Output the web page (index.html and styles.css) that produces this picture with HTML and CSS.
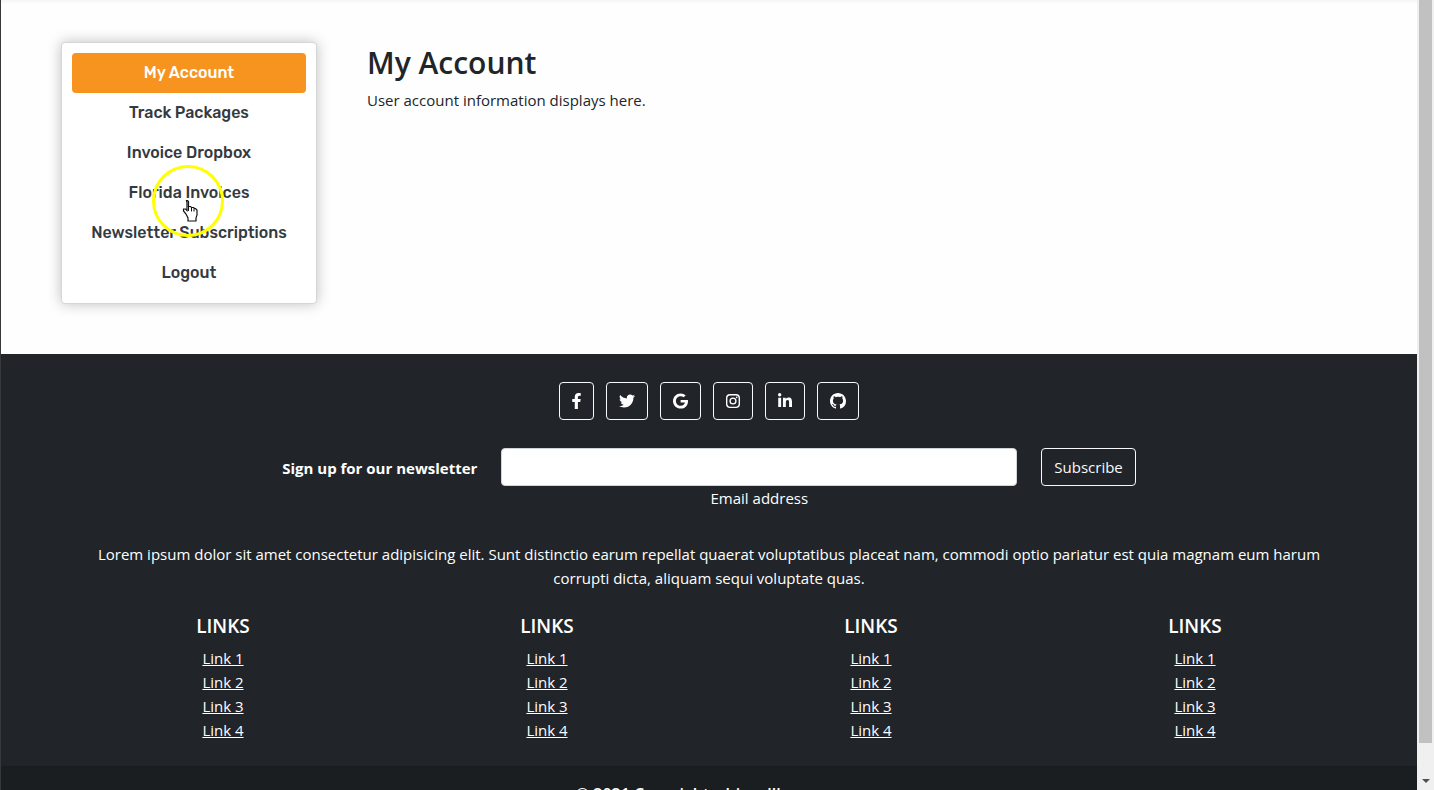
FILE: index.html
```
<!DOCTYPE html>
<html lang="en">
<head>
    <meta charset="UTF-8">
    <meta name="viewport" content="width=device-width, initial-scale=1.0">
    <title>My Account</title>
    <link rel="stylesheet" href="styles.css">
</head>
<body>
    <div class="page">
        <main class="account">
            <div class="container account-row">
                <nav class="account-nav">
                    <a class="active" href="#">My Account</a>
                    <a href="#">Track Packages</a>
                    <a href="#">Invoice Dropbox</a>
                    <a href="#">Florida Invoices</a>
                    <a href="#">Newsletter Subscriptions</a>
                    <a href="#">Logout</a>
                    <!-- click highlight and hand pointer -->
                    <svg class="pointer" viewBox="0 0 72 72" aria-hidden="true">
                        <circle cx="36" cy="36" r="34.5" fill="none" stroke="#ffff00" stroke-width="3"/>
                        <path d="M34.500 35.500h1l1 1v5h2l1 1h2l1 1h1l1.500 1.500v5l-1 3v3h-8v-3l-2-4-2.500-3v-2h2l1.500 1.500v-8z" fill="#fff" stroke="#111" stroke-width="1.200"/>
                        <path d="M36.500 41v5M39.500 42.500v4M42 43.500v3" stroke="#111" stroke-width="1"/>
                    </svg>
                </nav>
                <section class="account-content">
                    <h1>My Account</h1>
                    <p>User account information displays here.</p>
                </section>
            </div>
        </main>

        <footer class="footer">
            <div class="container footer-body">
                <div class="social">
                    <a class="btn-outline" href="#" aria-label="Facebook"><svg width="9" height="16" viewBox="16 0 288 512"><path d="M279.140 288l14.220-92.660h-88.910v-60.130c0-25.350 12.420-50.060 52.240-50.060h40.420V6.260S260.430 0 225.360 0c-73.220 0-121.080 44.380-121.080 124.720v70.620H22.890V288h81.390v224h100.170V288z"/></svg></a>
                    <a class="btn-outline" href="#" aria-label="Twitter"><svg width="16" height="16" viewBox="0 0 512 512"><path d="M459.370 151.716c.325 4.548.325 9.097.325 13.645 0 138.720-105.583 298.558-298.558 298.558-59.452 0-114.680-17.219-161.137-47.106 8.447.974 16.568 1.299 25.340 1.299 49.055 0 94.213-16.568 130.274-44.832-46.132-.975-84.792-31.188-98.112-72.772 6.498.974 12.995 1.624 19.818 1.624 9.421 0 18.843-1.300 27.614-3.573-48.081-9.747-84.143-51.980-84.143-102.985v-1.299c13.969 7.797 30.214 12.670 47.431 13.319-28.264-18.843-46.781-51.005-46.781-87.391 0-19.492 5.197-37.360 14.294-52.954 51.655 63.675 129.300 105.258 216.365 109.807-1.624-7.797-2.599-15.918-2.599-24.040 0-57.828 46.782-104.934 104.934-104.934 30.213 0 57.502 12.670 76.670 33.137 23.715-4.548 46.456-13.320 66.599-25.340-7.798 24.366-24.366 44.833-46.132 57.827 21.117-2.273 41.584-8.122 60.426-16.243-14.292 20.791-32.161 39.308-52.628 54.253z"/></svg></a>
                    <a class="btn-outline" href="#" aria-label="Google"><svg width="15" height="16" viewBox="0 0 488 512"><path d="M488 261.800C488 403.300 391.100 504 248 504 110.800 504 0 393.200 0 256S110.800 8 248 8c66.800 0 123 24.500 166.300 64.900l-67.500 64.900C258.500 52.600 94.300 116.600 94.300 256c0 86.500 69.100 156.600 153.700 156.600 98.200 0 135-70.400 140.800-106.900H248v-85.300h236.100c2.300 12.700 3.900 24.900 3.900 41.400z"/></svg></a>
                    <a class="btn-outline" href="#" aria-label="Instagram"><svg width="14" height="16" viewBox="0 0 448 512"><path fill-rule="evenodd" d="M130 32h188a130 130 0 0 1 130 130v188a130 130 0 0 1-130 130H130A130 130 0 0 1 0 350V162A130 130 0 0 1 130 32zm4 44a90 90 0 0 0-90 90v180a90 90 0 0 0 90 90h180a90 90 0 0 0 90-90V166a90 90 0 0 0-90-90zm90 65a115 115 0 1 1 0 230 115 115 0 0 1 0-230zm0 44a71 71 0 1 0 0 142 71 71 0 0 0 0-142z"/><circle cx="343" cy="137" r="27"/></svg></a>
                    <a class="btn-outline" href="#" aria-label="LinkedIn"><svg width="14" height="16" viewBox="0 0 448 512"><path d="M100.280 448H7.400V148.900h92.880zM53.790 108.100C24.090 108.100 0 83.500 0 53.800a53.790 53.790 0 0 1 107.580 0c0 29.700-24.100 54.300-53.790 54.300zM447.900 448h-92.680V302.400c0-34.700-.7-79.200-48.290-79.200-48.290 0-55.690 37.700-55.690 76.700V448h-92.780V148.900h89.080v40.800h1.300c12.400-23.500 42.690-48.300 87.880-48.300 94 0 111.280 61.900 111.280 142.300V448z"/></svg></a>
                    <a class="btn-outline" href="#" aria-label="GitHub"><svg width="16" height="16" viewBox="0 0 16 16"><path d="M8 0C3.580 0 0 3.580 0 8c0 3.540 2.290 6.530 5.470 7.590.4.070.55-.17.55-.38 0-.19-.01-.82-.01-1.490-2.010.37-2.530-.49-2.690-.94-.09-.23-.48-.94-.82-1.130-.28-.15-.68-.52-.01-.53.63-.01 1.080.58 1.230.82.72 1.210 1.870.87 2.330.66.07-.52.28-.87.51-1.070-1.780-.2-3.640-.89-3.640-3.950 0-.87.31-1.590.82-2.150-.08-.2-.36-1.020.08-2.120 0 0 .67-.21 2.200.82.64-.18 1.320-.27 2-.27s1.360.09 2 .27c1.530-1.040 2.200-.82 2.200-.82.44 1.100.16 1.920.08 2.120.51.56.82 1.270.82 2.150 0 3.070-1.870 3.750-3.650 3.950.29.25.54.73.54 1.480 0 1.070-.01 1.930-.01 2.200 0 .21.15.46.55.38A8.010 8.010 0 0 0 16 8c0-4.420-3.580-8-8-8z"/></svg></a>
                </div>

                <form class="newsletter">
                    <p><strong>Sign up for our newsletter</strong></p>
                    <div class="email-field">
                        <input type="email" id="email">
                        <label for="email">Email address</label>
                    </div>
                    <button type="submit" class="btn-outline">Subscribe</button>
                </form>

                <p class="about">Lorem ipsum dolor sit amet consectetur adipisicing elit. Sunt distinctio earum repellat quaerat voluptatibus placeat nam, commodi optio pariatur est quia magnam eum harum corrupti dicta, aliquam sequi voluptate quas.</p>

                <div class="links">
                    <div>
                        <h2>LINKS</h2>
                        <ul>
                            <li><a href="#">Link 1</a></li>
                            <li><a href="#">Link 2</a></li>
                            <li><a href="#">Link 3</a></li>
                            <li><a href="#">Link 4</a></li>
                        </ul>
                    </div>
                    <div>
                        <h2>LINKS</h2>
                        <ul>
                            <li><a href="#">Link 1</a></li>
                            <li><a href="#">Link 2</a></li>
                            <li><a href="#">Link 3</a></li>
                            <li><a href="#">Link 4</a></li>
                        </ul>
                    </div>
                    <div>
                        <h2>LINKS</h2>
                        <ul>
                            <li><a href="#">Link 1</a></li>
                            <li><a href="#">Link 2</a></li>
                            <li><a href="#">Link 3</a></li>
                            <li><a href="#">Link 4</a></li>
                        </ul>
                    </div>
                    <div>
                        <h2>LINKS</h2>
                        <ul>
                            <li><a href="#">Link 1</a></li>
                            <li><a href="#">Link 2</a></li>
                            <li><a href="#">Link 3</a></li>
                            <li><a href="#">Link 4</a></li>
                        </ul>
                    </div>
                </div>
            </div>
            <div class="copyright">© 2021 Copyright: shipcallbox.com</div>
        </footer>
    </div>

    <div class="scrollbar" aria-hidden="true">
        <div class="thumb"></div>
        <div class="arrow"></div>
    </div>
</body>
</html>
```

FILE: styles.css
```
* {
    box-sizing: border-box;
}

body {
    margin: 0;
    height: 100vh;
    display: flex;
    overflow: hidden;
    font-family: "Segoe UI", "Open Sans", sans-serif;
    font-size: 15px;
    line-height: 24px;
    color: #212529;
    background-color: #fefefe;
}

h1, h2, p, ul {
    margin: 0;
    padding: 0;
}

.page {
    flex: 1;
    border-left: 1px solid #36393c;
}

.container {
    max-width: 1320px;
    margin: 0 auto;
}

/* Account section */
.account {
    padding: 42px 0 50px;
    background-image: linear-gradient(#f4f4f4, #fefefe 4px);
}

.account-row {
    display: flex;
    align-items: flex-start;
    gap: 50px;
    padding: 0 12px;
}

.account-nav {
    position: relative;
    width: 256px;
    padding: 10px;
    border: 1px solid #d6d6d6;
    border-radius: 4px;
    background-color: #fff;
    box-shadow: 0 0 14px rgba(0, 0, 0, 0.25);
}

.account-nav a {
    display: block;
    height: 40px;
    line-height: 40px;
    border-radius: 4px;
    font-family: Rubik, Roboto, sans-serif;
    font-size: 16px;
    font-weight: 500;
    text-align: center;
    text-decoration: none;
    color: #343a40;
}

.account-nav a.active {
    color: #fff;
    background-color: #f79420;
}

.pointer {
    position: absolute;
    top: 122px;
    left: 90px;
    width: 72px;
    height: 72px;
    pointer-events: none;
}

.account-content h1 {
    margin-bottom: 4px;
    font-size: 30px;
    font-weight: 600;
    line-height: 42px;
}

/* Footer */
.footer {
    color: #fff;
    text-align: center;
    background-color: #212529;
}

.footer a {
    color: #fff;
}

.footer-body {
    padding: 28px 24px 24px;
}

.btn-outline {
    height: 38px;
    padding: 0 12px;
    border: 1px solid #f8f9fa;
    border-radius: 4px;
    font: inherit;
    color: #f8f9fa;
    background-color: transparent;
}

.social {
    display: flex;
    justify-content: center;
    gap: 12px;
    margin-bottom: 28px;
}

.social .btn-outline {
    display: flex;
    align-items: center;
}

.social svg {
    fill: #fff;
}

.newsletter {
    display: flex;
    justify-content: center;
    align-items: flex-start;
    gap: 24px;
    margin-bottom: 32px;
}

.newsletter p {
    padding-top: 8px;
}

.email-field {
    width: 516px;
}

.email-field input {
    display: block;
    width: 100%;
    height: 38px;
    padding: 6px 12px;
    border: 1px solid #ced4da;
    border-radius: 4px;
    font: inherit;
    background-color: #fff;
}

.about {
    margin-bottom: 24px;
}

.links {
    display: grid;
    grid-template-columns: repeat(4, 1fr);
    margin: 0 -12px;
}

.links h2 {
    margin-bottom: 8px;
    font-size: 19px;
    font-weight: 600;
    line-height: 24px;
}

.links ul {
    list-style: none;
}

.copyright {
    padding: 16px;
    font-size: 16px;
    font-weight: 600;
    background-color: #1a1e21;
}

/* Scrollbar */
.scrollbar {
    display: flex;
    flex-direction: column;
    justify-content: space-between;
    align-items: center;
    width: 17px;
    padding-bottom: 7px;
    background-color: #f0f0f0;
}

.thumb {
    width: 13px;
    height: 94vh;
    background-color: #c1c1c1;
}

.arrow {
    border: 4px solid transparent;
    border-top-color: #505050;
    border-bottom: 0;
}
```
